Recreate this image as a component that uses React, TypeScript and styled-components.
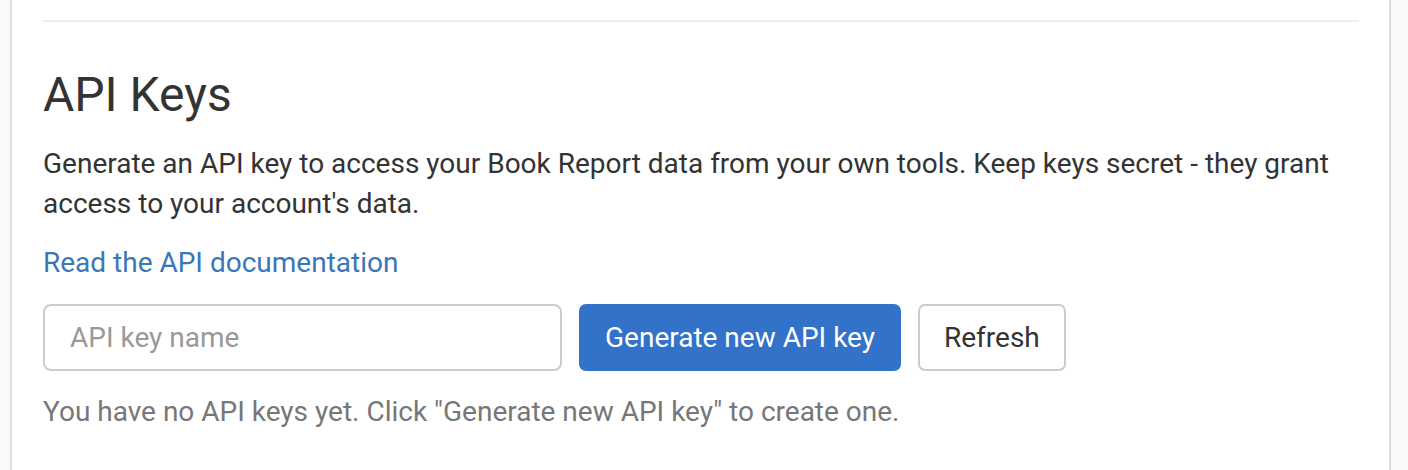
import React from 'react';
import styled, { createGlobalStyle } from 'styled-components';

const GlobalStyle = createGlobalStyle`
  html, body {
    margin: 0;
    padding: 0;
    background: #f9f9f9;
    font-family: Roboto, "Liberation Sans", Arial, sans-serif;
  }
`;

const Page = styled.div`
  height: 470px;
  overflow: hidden;
  padding-left: 10px;
  width: 1381px;
`;

const Card = styled.div`
  box-sizing: border-box;
  height: 100%;
  background: #fff;
  border-left: 2px solid #ddd;
  border-right: 2px solid #ddd;
  padding: 20px 30px 0 31px;
`;

const Rule = styled.hr`
  margin: 0;
  border: 0;
  height: 2px;
  background: #eee;
`;

const Title = styled.h2`
  margin: 47px 0 0;
  font-size: 48px;
  line-height: 52.8px;
  font-weight: 400;
  color: #333;
`;

const Text = styled.p<{ $muted?: boolean; $top: number }>`
  margin: ${(p) => p.$top}px 0 0;
  font-size: 28px;
  line-height: 40px;
  color: ${(p) => (p.$muted ? '#777' : '#333')};
`;

const DocLink = styled.a`
  color: #3a77b8;
  text-decoration: none;
`;

const Controls = styled.div`
  display: flex;
  align-items: center;
  gap: 17px;
  margin-top: 21px;
`;

const KeyInput = styled.input`
  box-sizing: border-box;
  width: 519px;
  height: 67px;
  padding: 0 25px;
  border: 2px solid #ccc;
  border-radius: 8px;
  font-family: inherit;
  font-size: 28px;
  color: #333;
  outline: none;
  &::placeholder {
    color: #999;
  }
`;

const Button = styled.button<{ $primary?: boolean }>`
  box-sizing: border-box;
  height: 67px;
  padding: 0 24px;
  border-radius: 7px;
  border: 2px solid ${(p) => (p.$primary ? '#3372c9' : '#ccc')};
  background: ${(p) => (p.$primary ? '#3372c9' : '#fff')};
  color: ${(p) => (p.$primary ? '#fff' : '#333')};
  font-family: inherit;
  font-size: 28px;
  cursor: pointer;
`;

export default function App() {
  return (
    <>
      <GlobalStyle />
      <Page>
        <Card>
          <Rule />
          <Title>API Keys</Title>
          <Text $top={22}>
            Generate an API key to access your Book Report data from your own tools. Keep keys secret - they grant
            access to your account's data.
          </Text>
          <Text $top={19}>
            <DocLink href="#">Read the API documentation</DocLink>
          </Text>
          <Controls>
            <KeyInput placeholder="API key name" />
            <Button $primary>Generate new API key</Button>
            <Button>Refresh</Button>
          </Controls>
          <Text $muted $top={21}>
            You have no API keys yet. Click "Generate new API key" to create one.
          </Text>
        </Card>
      </Page>
    </>
  );
}
